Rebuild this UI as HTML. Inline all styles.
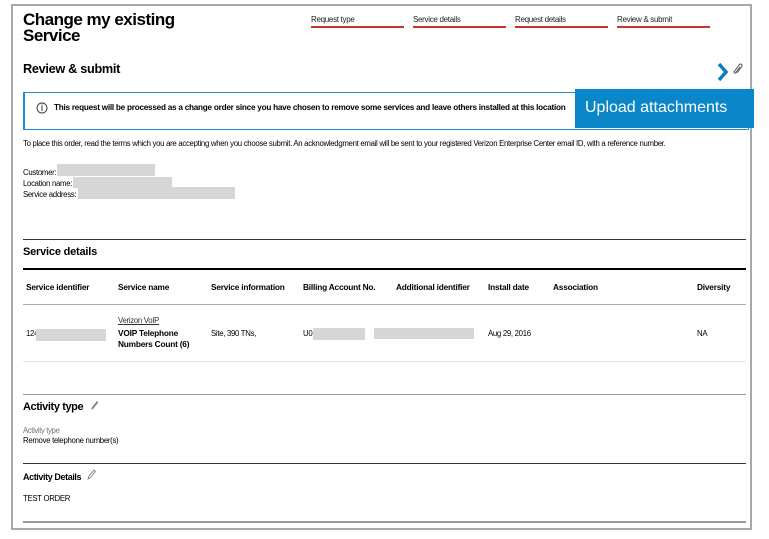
<!DOCTYPE html>
<html><head><meta charset="utf-8"><style>
body{margin:0;width:769px;height:539px;background:#fff;position:relative;overflow:hidden;font-family:"Liberation Sans",Arial,sans-serif;color:#000}
.a{position:absolute;white-space:nowrap}
.g{position:absolute;background:#d6d6d6}
.l{position:absolute;left:23px;width:723px}
.s{font-size:7.8px;letter-spacing:-0.3px}
.h{font-size:8.3px;font-weight:bold;letter-spacing:-0.2px}
.step{position:absolute;top:15px;font-size:8px;letter-spacing:-0.3px;width:93px;border-bottom:2px solid #c8332f;padding-bottom:2px;color:#222}
</style></head><body>
<div style="position:absolute;left:11px;top:4px;width:737px;height:522px;border:2px solid #a8a8a8"></div>
<div class="a" style="left:23px;top:12px;font-size:17px;font-weight:bold;line-height:16px;letter-spacing:-0.5px">Change my existing<br>Service</div>
<div class="step" style="left:311px">Request type</div>
<div class="step" style="left:413px">Service details</div>
<div class="step" style="left:515px">Request details</div>
<div class="step" style="left:617px">Review &amp; submit</div>
<div class="a" style="left:23px;top:62px;font-size:12.7px;font-weight:bold;letter-spacing:-0.3px">Review &amp; submit</div>
<svg class="a" style="left:716px;top:62px" width="30" height="20" viewBox="0 0 30 20"><path d="M3 2 L10 10 L3 18" fill="none" stroke="#0a7fc2" stroke-width="3.5"/><path d="M21 11 L26 4 a1.5 1.5 0 0 0 -2.5 -1.5 L18 10 a1 1 0 0 0 1.5 1 L24 5" fill="none" stroke="#555" stroke-width="1"/></svg>
<div style="position:absolute;left:23px;top:92px;width:723px;height:36px;border:1px solid #1d8fd0;border-left:2px solid #1d8fd0"></div>
<svg class="a" style="left:36px;top:102px" width="12" height="12"><circle cx="6" cy="6" r="5" fill="none" stroke="#333" stroke-width="0.9"/><line x1="6" y1="4" x2="6" y2="9" stroke="#333" stroke-width="1"/><circle cx="6" cy="3" r="0.6" fill="#333"/></svg>
<div class="a" style="left:54px;top:103px;font-size:8.2px;font-weight:bold;letter-spacing:-0.25px">This request will be processed as a change order since you have chosen to remove some services and leave others installed at this location</div>
<div class="a" style="left:575px;top:89px;width:179px;height:39px;background:#0b86c8;color:#fff;font-size:16px;line-height:38px;text-indent:10px">Upload attachments</div>
<div class="a s" style="left:23px;top:139px">To place this order, read the terms which you are accepting when you choose submit. An acknowledgment email will be sent to your registered Verizon Enterprise Center email ID, with a reference number.</div>
<div class="a s" style="left:23px;top:168px">Customer:</div><div class="g" style="left:57px;top:164px;width:98px;height:12px"></div>
<div class="a s" style="left:23px;top:179px">Location name:</div><div class="g" style="left:73px;top:177px;width:99px;height:11px"></div>
<div class="a s" style="left:23px;top:190px">Service address:</div><div class="g" style="left:78px;top:187px;width:157px;height:12px"></div>
<div class="l" style="top:239px;height:1px;background:#333"></div>
<div class="a" style="left:23px;top:246px;font-size:11px;font-weight:bold;letter-spacing:-0.2px">Service details</div>
<div class="l" style="top:268px;height:2px;background:#000"></div>
<div class="a h" style="left:26px;top:282px">Service identifier</div>
<div class="a h" style="left:118px;top:282px">Service name</div>
<div class="a h" style="left:211px;top:282px">Service information</div>
<div class="a h" style="left:303px;top:282px">Billing Account No.</div>
<div class="a h" style="left:396px;top:282px">Additional identifier</div>
<div class="a h" style="left:488px;top:282px">Install date</div>
<div class="a h" style="left:553px;top:282px">Association</div>
<div class="a h" style="left:697px;top:282px">Diversity</div>
<div class="l" style="top:304px;height:1px;background:#aaa"></div>
<div class="a s" style="left:118px;top:316px;text-decoration:underline;color:#333">Verizon VoIP</div>
<div class="a h" style="left:118px;top:328px;line-height:11px">VOIP Telephone<br>Numbers Count (6)</div>
<div class="a s" style="left:26px;top:329px">124</div><div class="g" style="left:36px;top:329px;width:70px;height:12px"></div>
<div class="a s" style="left:211px;top:329px">Site, 390 TNs,</div>
<div class="a s" style="left:303px;top:329px">U0</div><div class="g" style="left:313px;top:328px;width:52px;height:12px"></div>
<div class="g" style="left:374px;top:328px;width:100px;height:11px"></div>
<div class="a s" style="left:488px;top:329px">Aug 29, 2016</div>
<div class="a s" style="left:697px;top:329px">NA</div>
<div class="l" style="top:361px;height:1px;background:#e4e4e4"></div>
<div class="l" style="top:394px;height:1px;background:#999"></div>
<div class="a" style="left:23px;top:401px;font-size:11px;font-weight:bold;letter-spacing:-0.4px">Activity type</div>
<svg class="a" style="left:89px;top:400px" width="10" height="12"><path d="M2 10 L3 7 L8 1 L9.5 2.3 L4.5 8.5 Z" fill="#888"/></svg>
<div class="a" style="left:23px;top:426px;font-size:7.8px;color:#777;letter-spacing:-0.4px">Activity type</div>
<div class="a s" style="left:23px;top:436px">Remove telephone number(s)</div>
<div class="l" style="top:463px;height:1px;background:#333"></div>
<div class="a" style="left:23px;top:472px;font-size:9px;font-weight:bold;letter-spacing:-0.4px">Activity Details</div>
<svg class="a" style="left:86px;top:469px" width="10" height="12"><path d="M2 10 L3 7 L8 1 L9.5 2.3 L4.5 8.5 Z" fill="none" stroke="#777" stroke-width="0.8"/></svg>
<div class="a s" style="left:23px;top:494px">TEST ORDER</div>
<div class="l" style="top:521px;height:2px;background:#999"></div>
</body></html>
